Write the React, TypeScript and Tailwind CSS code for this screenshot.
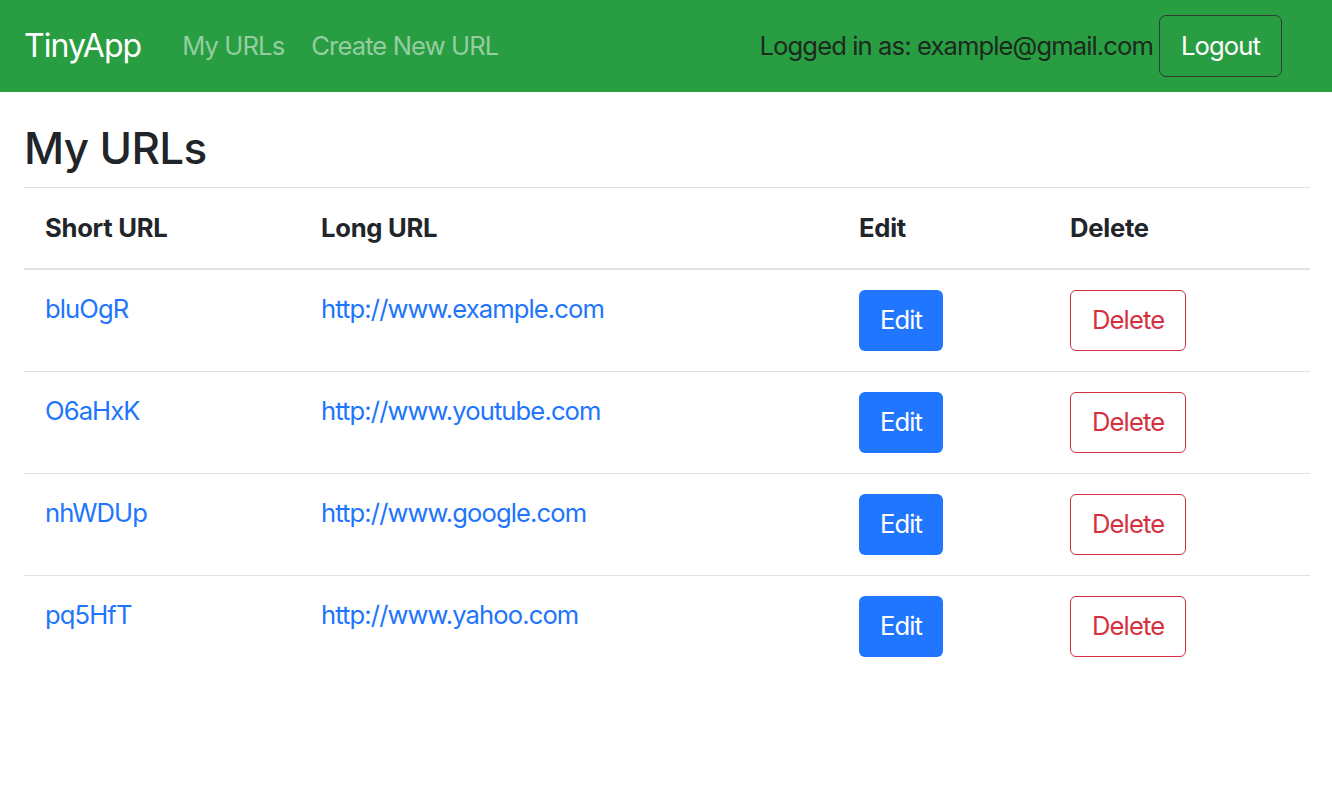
import React from 'react';

type Url = {
  short: string;
  long: string;
};

const urls: Url[] = [
  { short: 'bluOgR', long: 'http://www.example.com' },
  { short: 'O6aHxK', long: 'http://www.youtube.com' },
  { short: 'nhWDUp', long: 'http://www.google.com' },
  { short: 'pq5HfT', long: 'http://www.yahoo.com' },
];

export default function App() {
  return (
    <div
      className="min-h-[806px] bg-white text-[#212529] text-[25.6px] leading-[1.5] tracking-[-0.035em]"
      style={{ fontFamily: 'Inter, "Noto Sans", "Liberation Sans", sans-serif' }}
    >
      {/* navbar */}
      <nav className="h-[92px] bg-[#299d41] flex items-center pl-6 pr-[50px]">
        <a href="#" className="text-[32px] text-white mr-[41px] tracking-[-0.03em]">TinyApp</a>
        <div className="flex items-center gap-[27px] text-[#94cea0]">
          <a href="#">My URLs</a>
          <a href="#">Create New URL</a>
        </div>
        <div className="ml-auto flex items-center gap-[6px]">
          <span className="text-[#1b2a1f]">Logged in as: example@gmail.com</span>
          <button className="h-[62px] px-[21px] border-[1.5px] border-[#2f3b33] rounded-[7px] text-white">
            Logout
          </button>
        </div>
      </nav>

      <main className="pl-6 pr-[22px]">
        <h1 className="text-[44px] leading-[1.2] font-medium mt-[30px] mb-[12px] tracking-[-0.015em]">My URLs</h1>

        <table className="w-full border-t border-[#dee2e6] border-collapse">
          <colgroup>
            <col className="w-[276px]" />
            <col className="w-[538px]" />
            <col className="w-[211px]" />
            <col />
          </colgroup>
          <thead>
            <tr className="border-b-2 border-[#dee2e6] text-left">
              <th className="px-[21px] py-[21px] font-bold tracking-[-0.01em]">Short URL</th>
              <th className="px-[21px] py-[21px] font-bold tracking-[-0.01em]">Long URL</th>
              <th className="px-[21px] py-[21px] font-bold tracking-[-0.01em]">Edit</th>
              <th className="px-[21px] py-[21px] font-bold tracking-[-0.01em]">Delete</th>
            </tr>
          </thead>
          <tbody>
            {urls.map((u, i) => (
              <tr key={u.short} className={i < urls.length - 1 ? 'border-b border-[#dee2e6]' : ''}>
                <td className="px-[21px] py-[20px] align-top">
                  <a href="#" className="text-[#2175fd]">{u.short}</a>
                </td>
                <td className="px-[21px] py-[20px] align-top">
                  <a href="#" className="text-[#2175fd]">{u.long}</a>
                </td>
                <td className="px-[21px] py-[20px] align-top">
                  <button className="h-[61px] px-[21px] bg-[#2176ff] text-white rounded-[6px]">Edit</button>
                </td>
                <td className="px-[21px] py-[20px] align-top">
                  <button className="h-[61px] px-[21px] border border-[#d6303f] text-[#d6303f] rounded-[6px]">
                    Delete
                  </button>
                </td>
              </tr>
            ))}
          </tbody>
        </table>
      </main>
    </div>
  );
}
